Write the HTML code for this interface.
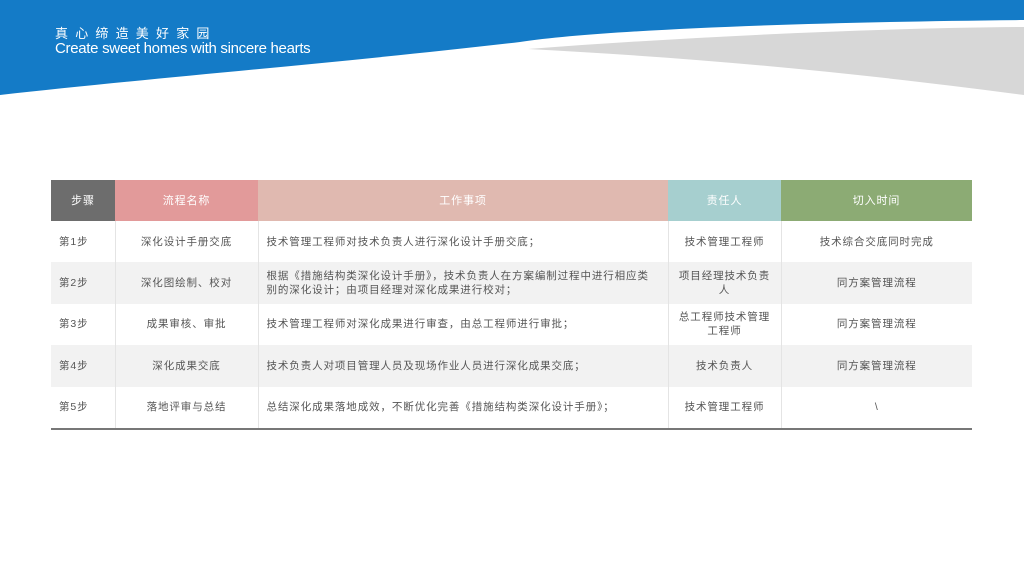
<!DOCTYPE html><html><head><meta charset="utf-8"><style>
body{margin:0;width:1024px;height:576px;background:#fff;position:relative;overflow:hidden;font-family:"Liberation Sans","Noto Sans CJK SC",sans-serif}
svg{position:absolute;left:0;top:0}
.t1{position:absolute;left:55px;top:23px;color:#fff;font-size:13px;letter-spacing:7.2px}
.t2{position:absolute;left:55px;top:40px;color:#fff;font-size:15px;letter-spacing:-0.3px}
table{position:absolute;left:51px;top:180px;width:921px;border-collapse:collapse;font-size:10.5px;color:#555;border-bottom:2px solid #777;letter-spacing:0.9px}
td,th{text-align:center;padding:0 8px;border-left:1px solid #e4e4e4;line-height:14px}
th{height:41px;color:#fff;font-weight:normal;border:none;font-size:11px}
td{height:41.4px}
tr:nth-child(odd) td{background:#f2f2f2}
td.l{text-align:left}
td:first-child{text-align:left;border-left:none}
td.r{padding:0 8px}
</style></head><body>
<svg width="1024" height="110" viewBox="0 0 1024 110">
<path d="M0 0H1024V20 C800 22 600 30 520 42 C350 62 150 78 0 95Z" fill="#147bc7"/>
<path d="M528 49 C700 36 880 28 1024 27 V95 C850 72 700 58 528 49Z" fill="#d7d7d7"/>
</svg>
<div class="t1">真心缔造美好家园</div>
<div class="t2">Create sweet homes with sincere hearts</div>
<table>
<tr><th style="width:48px;background:#6d6d6d">步骤</th><th style="width:127px;background:#e29a9a">流程名称</th><th style="width:394px;background:#e0b9b0">工作事项</th><th style="width:97px;background:#a6cfcf">责任人</th><th style="background:#8cab74">切入时间</th></tr>
<tr><td>第1步</td><td>深化设计手册交底</td><td class="l">技术管理工程师对技术负责人进行深化设计手册交底；</td><td class="r">技术管理工程师</td><td>技术综合交底同时完成</td></tr>
<tr><td>第2步</td><td>深化图绘制、校对</td><td class="l">根据《措施结构类深化设计手册》，技术负责人在方案编制过程中进行相应类别的深化设计；由项目经理对深化成果进行校对；</td><td class="r">项目经理技术负责人</td><td>同方案管理流程</td></tr>
<tr><td>第3步</td><td>成果审核、审批</td><td class="l">技术管理工程师对深化成果进行审查，由总工程师进行审批；</td><td class="r">总工程师技术管理工程师</td><td>同方案管理流程</td></tr>
<tr><td>第4步</td><td>深化成果交底</td><td class="l">技术负责人对项目管理人员及现场作业人员进行深化成果交底；</td><td class="r">技术负责人</td><td>同方案管理流程</td></tr>
<tr><td>第5步</td><td>落地评审与总结</td><td class="l">总结深化成果落地成效，不断优化完善《措施结构类深化设计手册》；</td><td class="r">技术管理工程师</td><td>\</td></tr>
</table>
</body></html>
